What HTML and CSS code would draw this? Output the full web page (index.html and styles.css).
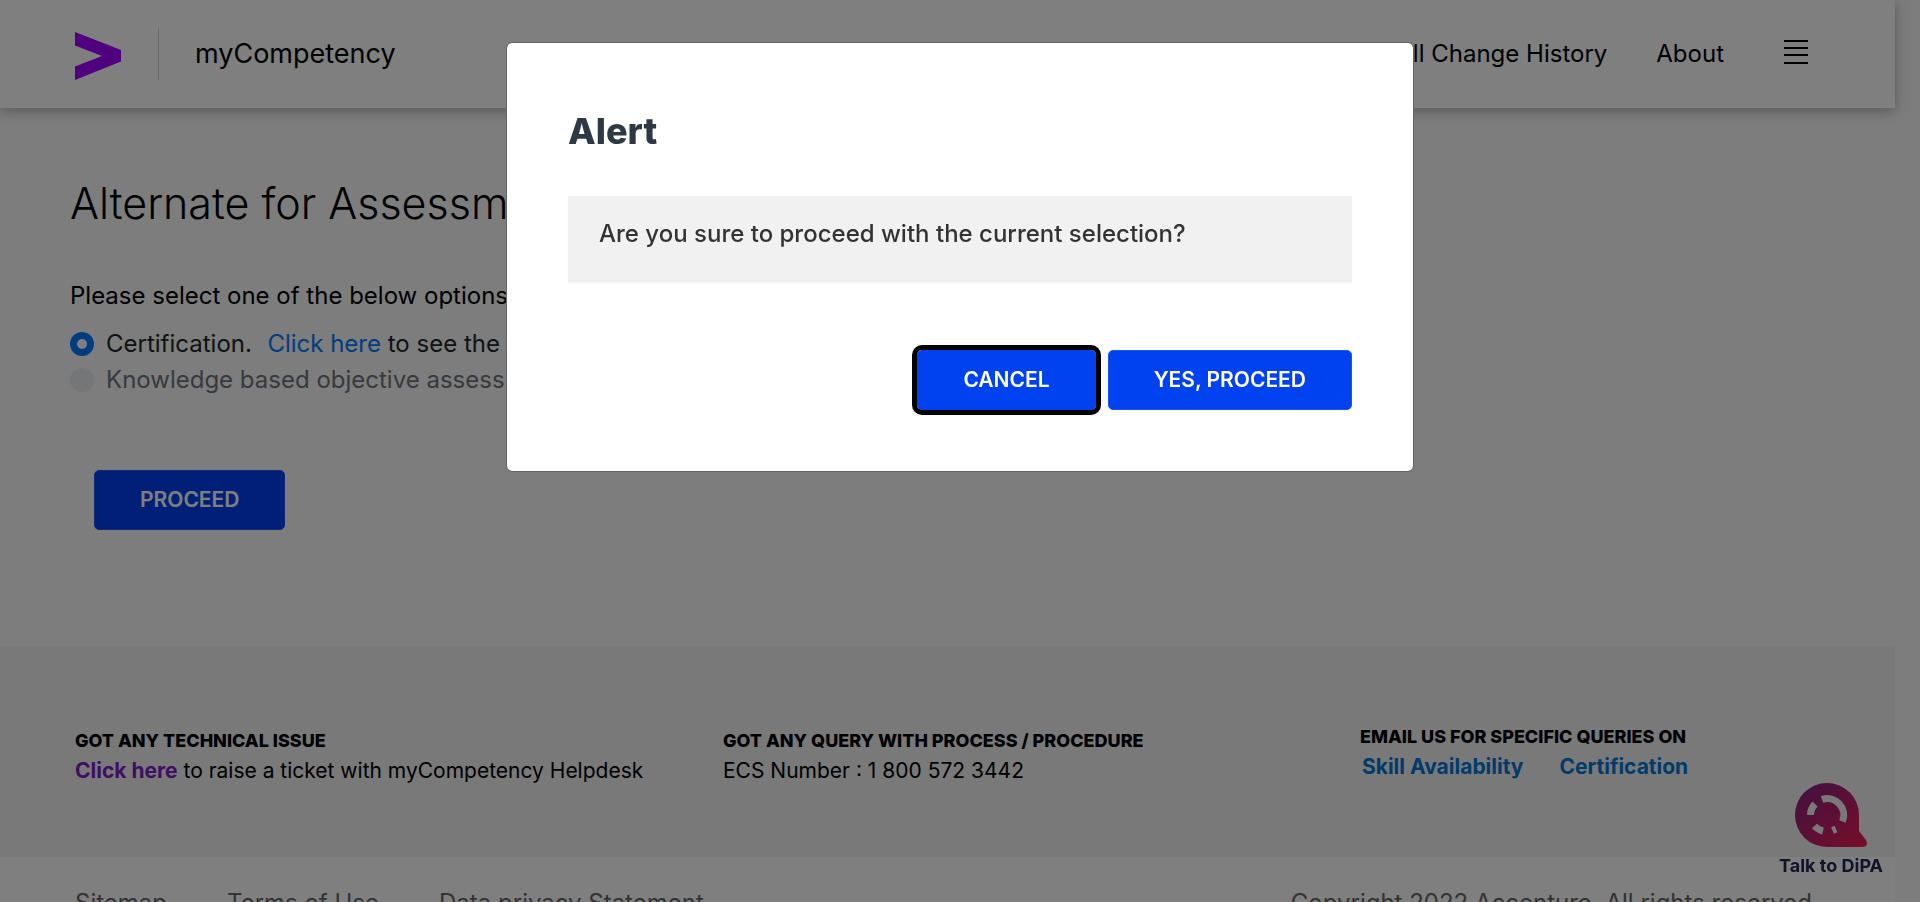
FILE: index.html
```html
<!DOCTYPE html>
<html lang="en">
<head>
<meta charset="utf-8">
<title>myCompetency</title>
<link rel="stylesheet" href="styles.css">
</head>
<body>
<div class="page">
  <header class="header">
    <a class="brand" href="#" aria-label="Home">
      <svg class="brand-mark" viewBox="0 0 47 48" aria-hidden="true"><path fill="#a100ff" d="M0 0 46 18V29.500L0 48V34.500L27 24 0 13.500Z"/></svg>
    </a>
    <span class="brand-name">myCompetency</span>
    <nav class="nav">
      <a href="#">Skill Change History</a>
      <a href="#">About</a>
      <button class="menu" type="button" aria-label="Menu">
        <svg viewBox="0 0 26 26" aria-hidden="true"><path stroke="#000" stroke-width="2" d="M1 2h24M1 9h24M1 16h24M1 24h24"/></svg>
      </button>
    </nav>
  </header>
  <main class="main">
    <h1 class="title">Alternate for Assessment</h1>
    <p class="lead">Please select one of the below options</p>
    <div class="option">
      <input type="radio" name="alt" id="cert" checked>
      <label for="cert">Certification.&nbsp; <a href="#">Click here</a> to see the list</label>
    </div>
    <div class="option">
      <input type="radio" name="alt" id="know" disabled>
      <label for="know">Knowledge based objective assessment</label>
    </div>
    <button class="btn main-btn" type="button">PROCEED</button>
  </main>
  <footer>
    <div class="help">
      <section>
        <h2>GOT ANY TECHNICAL ISSUE</h2>
        <p><a class="ticket" href="#">Click here</a> to raise a ticket with myCompetency Helpdesk</p>
      </section>
      <section>
        <h2>GOT ANY QUERY WITH PROCESS / PROCEDURE</h2>
        <p>ECS Number : 1 800 572 3442</p>
      </section>
      <section class="email">
        <h2>EMAIL US FOR SPECIFIC QUERIES ON</h2>
        <p class="mails"><a href="#">Skill Availability</a><a href="#">Certification</a></p>
      </section>
    </div>
    <div class="legal">
      <a href="#">Sitemap</a>
      <a href="#">Terms of Use</a>
      <a href="#">Data privacy Statement</a>
      <span class="copy">Copyright 2022 Accenture. All rights reserved</span>
    </div>
  </footer>
</div>
<button class="chat" type="button">
  <svg viewBox="0 0 73 64" aria-hidden="true">
    <defs><linearGradient id="g" x1="0" y1="0" x2="1" y2="1"><stop offset="0" stop-color="#821f80"/><stop offset=".5" stop-color="#b8206c"/><stop offset="1" stop-color="#f01c50"/></linearGradient></defs>
    <path fill="url(#g)" d="M32 0A32 32 0 0 1 64 32V48L71 57Q74 64 67 64H32A32 32 0 0 1 32 0Z"/>
    <g fill="none" stroke="#f2f2f2" stroke-width="7">
      <path d="M27 16.500A16.500 16.500 0 0 1 47.500 38.500"/>
      <path d="M15.500 32A16.500 16.500 0 0 1 20 21"/>
      <path d="M19.500 43A16.500 16.500 0 0 0 28 48"/>
      <path d="M37.500 47.500 41 46"/>
    </g>
  </svg>
  <span>Talk to DiPA</span>
</button>
<div class="overlay">
  <div class="modal" role="dialog" aria-modal="true" aria-labelledby="alert-title">
    <h2 class="modal-title" id="alert-title">Alert</h2>
    <p class="message">Are you sure to proceed with the current selection?</p>
    <div class="actions">
      <button class="btn focused" type="button">CANCEL</button>
      <button class="btn" type="button">YES, PROCEED</button>
    </div>
  </div>
</div>
</body>
</html>
```
FILE: styles.css
```css
* { box-sizing: border-box; }

body {
  margin: 0;
  height: 100vh;
  overflow: hidden;
  padding-right: 25px;
  background: #fafafa;
  color: #000;
  font: 400 24px/36px Inter, "Liberation Sans", sans-serif;
}

h1, h2, p { margin: 0; }
a { text-decoration: none; }
button { font-family: inherit; cursor: pointer; }

.header {
  display: flex;
  align-items: center;
  height: 108px;
  padding: 0 86px 0 75px;
  background: #fff;
  box-shadow: 0 3px 12px rgba(0, 0, 0, .3);
}
.brand {
  display: flex;
  align-items: center;
  height: 52px;
  padding-right: 36px;
  border-right: 1px solid #d5d5d5;
}
.brand-mark { width: 47px; height: 48px; margin-top: 4px; }
.brand-name { margin-left: 36px; font-size: 27px; }
.nav {
  display: flex;
  align-items: center;
  gap: 49px;
  margin-left: auto;
}
.nav a { color: #000; }
.menu { display: flex; margin: 0 0 4px 10px; padding: 0; border: 0; background: none; }
.menu svg { width: 26px; height: 26px; }

.main { height: 538px; padding: 69px 70px 0; }
.title { font-size: 43px; font-weight: 300; line-height: 52px; }
.lead { margin: 49px 0 12px; }
.option { display: flex; align-items: center; gap: 12px; color: #212529; }
.option a { margin-left: 2px; color: #007bff; }
.option input {
  appearance: none;
  width: 24px;
  height: 24px;
  margin: 0;
  border-radius: 50%;
  background: #e9ecef;
}
.option input:checked { border: 7px solid #007bff; background: #fff; }
.option input:disabled + label { color: #6c757d; }

.btn {
  height: 60px;
  padding: 0 45px;
  border: 1px solid #1a55f2;
  border-radius: 5px;
  background: #0041f0;
  color: #fff;
  font-size: 21px;
  font-weight: 600;
  line-height: 28px;
}
.btn.focused { border-color: #0041f0; outline: 5px solid #000; }
.main-btn { margin: 72px 0 0 24px; }

.help {
  display: grid;
  grid-template-columns: 648px 637px 1fr;
  align-items: start;
  min-height: 211px;
  padding: 80px 75px 0;
  background: #f2f2f2;
  font-size: 21px;
  line-height: 30px;
}
.help h2 { font-size: 18px; font-weight: 800; line-height: 30px; }
.help a { font-weight: 700; }
.ticket { color: #7d1fc8; }
.email { margin-top: -4px; }
.mails { display: flex; gap: 36px; padding-left: 2px; }
.mails a { color: #0076d6; }

.legal {
  display: flex;
  gap: 60px;
  padding: 28px 83px 40px 75px;
  background: #fff;
}
.legal, .legal a { color: #666; }
.copy { margin-left: auto; }

.chat {
  position: fixed;
  right: 37px;
  bottom: 25px;
  display: flex;
  flex-direction: column;
  align-items: center;
  gap: 8px;
  padding: 0;
  border: 0;
  background: none;
  color: #202850;
  font-size: 18px;
  font-weight: 700;
  line-height: 22px;
}
.chat svg { width: 73px; height: 64px; }

.overlay {
  position: fixed;
  inset: 0;
  display: flex;
  justify-content: center;
  align-items: flex-start;
  padding-top: 42px;
  background: rgba(0, 0, 0, .5);
}
.modal {
  width: 908px;
  padding: 66px 61px 61px;
  border: 1px solid #666;
  border-radius: 6px;
  background: #fff;
  background-clip: padding-box;
}
.modal-title { color: #2e3945; font-size: 36px; font-weight: 800; line-height: 44px; }
.message {
  margin-top: 43px;
  padding: 20px 31px 30px;
  background: #f1f1f1;
  box-shadow: 0 1px 2px rgba(0, 0, 0, .05);
  color: #333;
  font-weight: 500;
}
.actions {
  display: flex;
  justify-content: flex-end;
  gap: 12px;
  margin-top: 68px;
}
```
